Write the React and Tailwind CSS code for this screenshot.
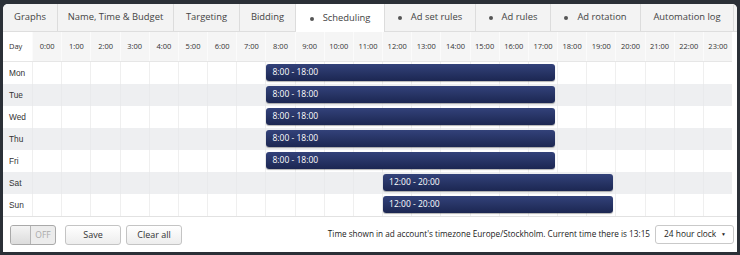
import React from "react";

const tabs = [
  { label: "Graphs", w: 55 },
  { label: "Name, Time & Budget", w: 116 },
  { label: "Targeting", w: 66 },
  { label: "Bidding", w: 56 },
  { label: "Scheduling", w: 89, dot: true, active: true },
  { label: "Ad set rules", w: 91, dot: true },
  { label: "Ad rules", w: 75, dot: true },
  { label: "Ad rotation", w: 90, dot: true },
  { label: "Automation log", w: 93 },
];

const days = [
  { d: "Mon", from: 8, to: 18 },
  { d: "Tue", from: 8, to: 18 },
  { d: "Wed", from: 8, to: 18 },
  { d: "Thu", from: 8, to: 18 },
  { d: "Fri", from: 8, to: 18 },
  { d: "Sat", from: 12, to: 20 },
  { d: "Sun", from: 12, to: 20 },
];

const hours = Array.from({ length: 24 }, (_, i) => `${i}:00`);

export default function App() {
  return (
    <div className="w-[740px] h-[255px] bg-[#2b3037] pt-[4px] px-[3px] pb-[3px] font-['Open_Sans',sans-serif]">
      <div className="h-full bg-white rounded-t-[5px] overflow-hidden flex flex-col">
        {/* tabs */}
        <div className="flex h-[28px] bg-[#f3f3f3] border-b border-[#dedede]">
          {tabs.map((t) => (
            <div
              key={t.label}
              style={{ width: t.w }}
              className={
                "shrink-0 flex items-center justify-center gap-[9px] text-[9.4px] text-[#444] border-r border-[#dcdcdc] " +
                (t.active ? "bg-white h-[29px]" : "")
              }
            >
              {t.dot && <span className="w-[4px] h-[4px] rounded-full bg-[#555]" />}
              <span>{t.label}</span>
            </div>
          ))}
          <div className="flex-1" />
        </div>

        {/* grid */}
        <div className="mr-[5px]">
          <div className="grid grid-cols-[repeat(25,minmax(0,1fr))] h-[30px] border-b border-[#e6e6e6]">
            <div className="flex items-center pl-[6px] text-[7.5px] text-[#333] bg-white">Day</div>
            {hours.map((h) => (
              <div key={h} className="flex items-center justify-center text-[7.5px] text-[#333] bg-[#f5f5f5] border-l border-[#fbfbfb]">
                {h}
              </div>
            ))}
          </div>
          {days.map((row, i) => (
            <div key={row.d} className={"relative h-[22px] " + (i % 2 === 1 ? "bg-[#eeeff1]" : "bg-white")}>
              <div className="grid grid-cols-[repeat(25,minmax(0,1fr))] h-full">
                <div className="flex items-center pl-[6px] text-[8.3px] text-[#333] font-['Liberation_Sans',sans-serif]">{row.d}</div>
                {hours.map((h) => (
                  <div key={h} className={"border-l " + (i % 2 === 1 ? "border-[#e9eaec]" : "border-[#efefef]")} />
                ))}
              </div>
              <div
                className="absolute top-[2px] h-[17px] rounded-[3px] bg-gradient-to-b from-[#33427a] to-[#1c2752] text-white text-[8.5px] flex items-center pl-[6px] shadow-[0_1px_1px_rgba(0,0,0,0.3)]"
                style={{
                  left: `calc(${((row.from + 1) / 25) * 100}% + 1px)`,
                  width: `calc(${((row.to - row.from) / 25) * 100}% - 3px)`,
                }}
              >
                {row.from}:00 - {row.to}:00
              </div>
            </div>
          ))}
        </div>

        {/* footer */}
        <div className="flex-1 border-t border-[#e2e2e2] flex items-center pl-[7px] pr-[3px] gap-[9px]">
          <div className="w-[46px] h-[20px] rounded-[3px] border border-[#a9a9a9] flex overflow-hidden bg-[#ececec]">
            <div className="w-[20px] h-full bg-gradient-to-b from-[#f4f4f4] to-[#dcdcdc] border-r border-[#b5b5b5]" />
            <div className="flex-1 flex items-center justify-center text-[8.5px] text-[#aaa] pt-[2px]">OFF</div>
          </div>
          <button className="w-[56px] h-[20px] rounded-[3px] border border-[#c4c4c4] bg-gradient-to-b from-white to-[#ededed] text-[9px] text-[#333]">
            Save
          </button>
          <button className="w-[56px] h-[20px] rounded-[3px] border border-[#c4c4c4] bg-gradient-to-b from-white to-[#ededed] text-[9px] text-[#333] -ml-[4px]">
            Clear all
          </button>
          <div className="flex-1" />
          <span className="text-[8.2px] text-[#222]">
            Time shown in ad account's timezone Europe/Stockholm. Current time there is 13:15
          </span>
          <div className="w-[79px] h-[19px] rounded-[3px] border border-[#c9c9c9] bg-white flex items-center pl-[8px] pr-[7px] text-[8.4px] text-[#222] -ml-[4px]">
            <span className="flex-1">24 hour clock</span>
            <span className="text-[5px]">▼</span>
          </div>
        </div>
      </div>
    </div>
  );
}
